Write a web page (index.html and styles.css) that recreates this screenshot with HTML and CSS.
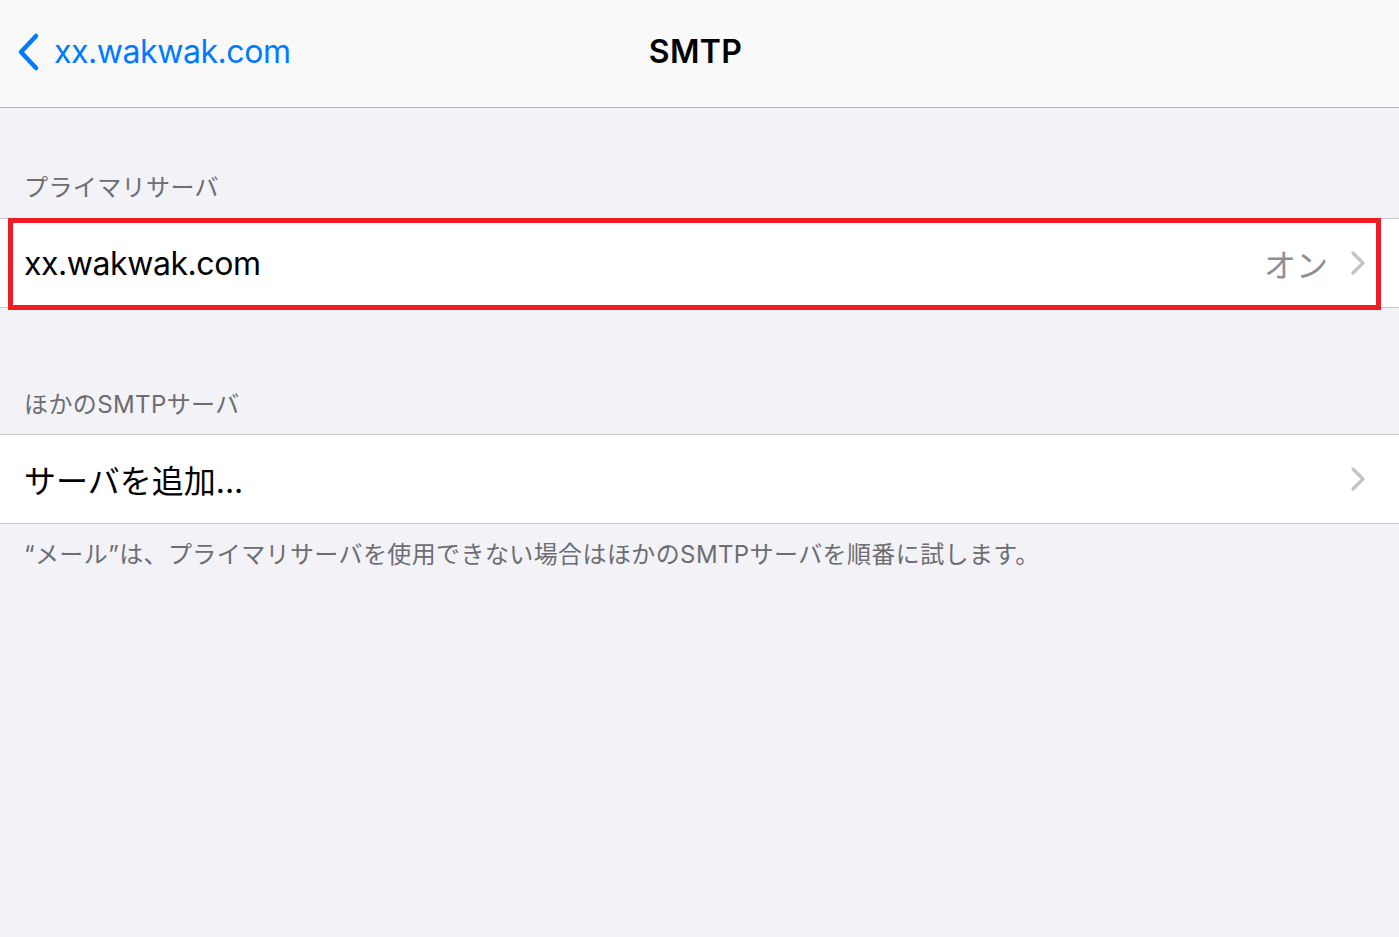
FILE: index.html
```html
<!DOCTYPE html>
<html lang="ja">
<head>
    <meta charset="UTF-8">
    <meta name="viewport" content="width=device-width, initial-scale=1.0">
    <title>SMTP</title>
    <link rel="stylesheet" href="styles.css">
</head>
<body>
    <header class="navbar">
        <a class="back" href="#">
            <svg class="back-icon" width="26" height="40" viewBox="0 0 26 40">
                <path d="M21 4 L6 20 L21 36" fill="none" stroke="#007aff" stroke-width="4.5" stroke-linecap="round" stroke-linejoin="round"/>
            </svg>
            <span class="latin">xx.wakwak.com</span>
        </a>
        <h1 class="title">SMTP</h1>
        <div></div>
    </header>

    <main>
        <div class="section-header first">プライマリサーバ</div>
        <div class="group">
            <div class="row">
                <span class="row-label latin">xx.wakwak.com</span>
                <span class="row-value">オン</span>
                <svg class="chevron" width="16" height="26" viewBox="0 0 16 26">
                    <path d="M3 3 L13 13 L3 23" fill="none" stroke="#c4c4c7" stroke-width="3.2" stroke-linecap="round" stroke-linejoin="round"/>
                </svg>
                <div class="highlight"></div>
            </div>
        </div>

        <div class="section-header second">ほかのSMTPサーバ</div>
        <div class="group">
            <div class="row">
                <span class="row-label">サーバを追加...</span>
                <svg class="chevron" width="16" height="26" viewBox="0 0 16 26">
                    <path d="M3 3 L13 13 L3 23" fill="none" stroke="#c4c4c7" stroke-width="3.2" stroke-linecap="round" stroke-linejoin="round"/>
                </svg>
            </div>
        </div>
        <p class="footer">“メール”は、プライマリサーバを使用できない場合はほかのSMTPサーバを順番に試します。</p>
    </main>
</body>
</html>
```

FILE: styles.css
```css
body {
    margin: 0;
    background-color: #f2f2f7;
    font-family: Inter, "Noto Sans CJK JP", sans-serif;
    color: #000;
}
.navbar {
    height: 108px;
    box-sizing: border-box;
    padding-bottom: 4px;
    display: grid;
    grid-template-columns: 1fr auto 1fr;
    align-items: center;
    background-color: #f9f9fa;
    border-bottom: 1px solid #b4b4b8;
}
.back {
    display: flex;
    align-items: center;
    gap: 13px;
    padding-left: 15px;
    color: #007aff;
    text-decoration: none;
    font-size: 32px;
    line-height: 40px;
}
.latin {
    letter-spacing: -0.45px;
}
.title {
    margin: 0 8px 0 0;
    font-size: 32px;
    font-weight: 600;
    line-height: 40px;
    letter-spacing: 0.3px;
}
.section-header {
    padding: 0 24px;
    font-size: 24px;
    line-height: 28px;
    letter-spacing: 0.4px;
    color: #6d6d72;
}
.section-header.first {
    padding-top: 66px;
    padding-bottom: 16px;
}
.section-header.second {
    padding-top: 83px;
    padding-bottom: 15px;
}
.group {
    background: white;
    border-top: 1px solid #c8c7cc;
    border-bottom: 1px solid #c8c7cc;
}
.row {
    position: relative;
    height: 88px;
    display: flex;
    align-items: center;
    padding: 0 33px 0 24px;
}
.row-label {
    flex: 1;
    font-size: 32px;
}
.row-value {
    font-size: 32px;
    color: #8e8e93;
    margin-right: 22px;
}
.highlight {
    position: absolute;
    left: 8px;
    right: 18px;
    top: -1px;
    bottom: -3px;
    border: 5px solid #ee1c25;
}
.footer {
    margin: 0;
    padding: 17px 24px 0;
    font-size: 24px;
    line-height: 28px;
    letter-spacing: 0.4px;
    color: #6d6d72;
}
```
